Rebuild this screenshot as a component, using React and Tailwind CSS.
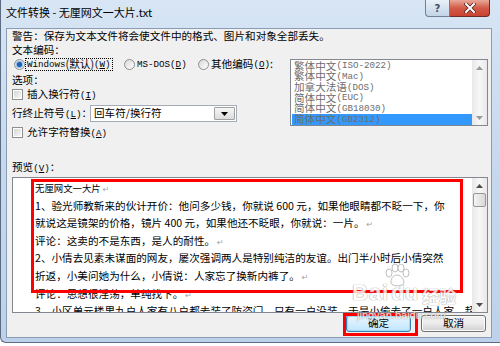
import React from 'react'

const mono = "font-['Liberation_Mono',monospace] text-[9.2px]"

function Radio({ checked }) {
  return (
    <span className="w-[11px] h-[11px] shrink-0 rounded-full border border-[#8e8f8f] bg-linear-to-br from-[#d8d8d8] to-white flex items-center justify-center">
      {checked && <span className="w-[5px] h-[5px] rounded-full bg-[#1d5fb2] shadow-[0_0_1px_1px_#7fb2ea]" />}
    </span>
  )
}

function Checkbox() {
  return (
    <span className="w-[11px] h-[11px] shrink-0 border border-[#8e8f8f] bg-white p-[1px]">
      <span className="block w-full h-full bg-linear-to-br from-[#d6d6d6] to-[#f7f7f7]" />
    </span>
  )
}

function Key({ k }) {
  return (
    <span className={mono}>
      (<span className="underline underline-offset-1">{k}</span>)
    </span>
  )
}

function Arrow({ up, color = '#4d4d4d' }) {
  return (
    <svg width="7" height="4" viewBox="0 0 7 4">
      <path d={up ? 'M0 4 L3.5 0 L7 4 Z' : 'M0 0 L3.5 4 L7 0 Z'} fill={color} />
    </svg>
  )
}

function Scrollbar({ thumb, arrowColor }) {
  return (
    <div className="w-[15px] shrink-0 flex flex-col bg-linear-to-r from-[#e8e8e8] via-[#f7f7f7] to-[#e8e8e8]">
      <div className="h-[15px] flex items-center justify-center">
        <Arrow up color={arrowColor} />
      </div>
      {thumb && (
        <div className="h-[14px] mx-[1px] rounded-[2px] border border-[#979797] bg-linear-to-r from-[#f4f4f4] to-[#d9d9d9]" />
      )}
      <div className="flex-1" />
      <div className="h-[15px] flex items-center justify-center">
        <Arrow color={arrowColor} />
      </div>
    </div>
  )
}

const encodings = [
  ['繁体中文', '(ISO-2022)'],
  ['繁体中文', '(Mac)'],
  ['加拿大法语', '(DOS)'],
  ['简体中文', '(EUC)'],
  ['简体中文', '(GB18030)'],
  ['简体中文', '(GB2312)'],
]

const Mark = () => <span className="text-[#a0a0a0] text-[8px] font-['DejaVu_Sans',sans-serif] ml-[2px]">↵</span>

const previewLines = [
  <span className="text-[9.4px]">无厘网文一大片<Mark /></span>,
  <>1、验光师教新来的伙计开价：他问多少钱，你就说 600 元，如果他眼睛都不眨一下，你</>,
  <>就说这是镜架的价格，镜片 400 元，如果他还不眨眼，你就说：一片。<Mark /></>,
  <>评论：这卖的不是东西，是人的耐性。<Mark /></>,
  <>2、小倩去见素未谋面的网友，屡次强调两人是特别纯洁的友谊。出门半小时后小倩突然</>,
  <>折返，小美问她为什么，小倩说：人家忘了换新内裤了。<Mark /></>,
  <>评论：思想很淫荡，单纯找下。<Mark /></>,
  <>3、小区单元楼里九户人家有八户都去装了防盗门，只有一户没装，于是小偷去了一户人家，超</>,
]

function Button({ children, focused }) {
  return (
    <div
      className={
        'w-[65px] h-[17px] rounded-[3px] border flex items-center justify-center leading-none ' +
        (focused
          ? 'border-[#3c7fb1] bg-linear-to-b from-[#eaf6fd] to-[#bee6fd] shadow-[inset_0_0_0_1px_#9fd9f7]'
          : 'border-[#707070] bg-linear-to-b from-[#f2f2f2] via-[#ebebeb] to-[#cfcfcf] shadow-[inset_0_0_0_1px_#fcfcfc]')
      }
    >
      {children}
    </div>
  )
}

export default function App() {
  return (
    <div className="w-[500px] h-[346px] bg-white overflow-hidden relative font-['Noto_Sans_CJK_SC',sans-serif] text-black">
      <div className="h-[343px] flex flex-col border-l border-b border-[#5b6b80] rounded-bl-[6px] bg-linear-to-b from-[#d7e5f4] via-[#c6d8ee] to-[#bdd2ea]">
        {/* title bar */}
        <div className="h-[28px] shrink-0 flex items-start">
          <div className="pl-[5px] pt-[4px] text-[11px] leading-[17px] whitespace-nowrap">文件转换 - 无厘网文一大片.txt</div>
          <div className="ml-auto mr-[10px] flex">
            <div className="w-[25px] h-[17px] border border-[#6f8097] border-t-0 rounded-bl-[4px] bg-linear-to-b from-[#e9f0f8] to-[#c3d4e8] flex items-center justify-center text-[10px] font-bold text-[#3d4f66] font-['DejaVu_Sans',sans-serif]">
              ?
            </div>
            <div className="w-[40px] h-[17px] border border-[#6a2e28] border-t-0 border-l-0 rounded-br-[4px] bg-linear-to-b from-[#e8a89a] via-[#d25a48] to-[#c8432f] flex items-center justify-center">
              <svg width="12" height="10" viewBox="0 0 12 10">
                <path d="M2 1 L10 9 M10 1 L2 9" stroke="#4a2020" strokeWidth="3.4" strokeLinecap="square" />
                <path d="M2 1 L10 9 M10 1 L2 9" stroke="#ffffff" strokeWidth="2" strokeLinecap="square" />
              </svg>
            </div>
          </div>
        </div>

        {/* client area */}
        <div className="h-[310px] ml-[5px] mr-[8px] border border-[#8a9db5] bg-[#f0f0f0] flex flex-col pl-[5px] pr-[3px] text-[10.6px]">
          <div className="h-[14px] leading-[14px] whitespace-nowrap">警告：保存为文本文件将会使文件中的格式、图片和对象全部丢失。</div>
          <div className="h-[14px] leading-[14px]">文本编码：</div>

          <div className="h-[83px] flex">
            <div className="flex-1 flex flex-col">
              <div className="h-[15px] flex items-center whitespace-nowrap">
                <span className="ml-[2px]"><Radio checked /></span>
                <span className="w-[88px] h-[13px] border border-dotted border-black px-[1px] flex items-center leading-none">
                  <span className={mono}>Windows</span>(默认)<Key k="W" />
                </span>
                <span className="ml-[11px]"><Radio /></span>
                <span className="w-[52px] pl-[2px] flex items-center leading-none">
                  <span className={mono}>MS-DOS</span><Key k="D" />
                </span>
                <span className="ml-[11px]"><Radio /></span>
                <span className="pl-[2px] flex items-center leading-none">
                  其他编码<Key k="O" />:
                </span>
              </div>
              <div className="h-[15px] leading-[15px]">选项：</div>
              <div className="h-[15px] flex items-center">
                <Checkbox />
                <span className="ml-[4px] leading-none">插入换行符<Key k="I" /></span>
              </div>
              <div className="mt-[3px] h-[17px] flex items-center">
                <span className="w-[78px] shrink-0 leading-none whitespace-nowrap">行终止符号<Key k="L" />：</span>
                <div className="w-[147px] h-[17px] border border-[#a5acb5] bg-white flex">
                  <div className="flex-1 pl-[3px] flex items-center leading-none">回车符/换行符</div>
                  <div className="w-[21px] m-[1px] border border-[#a0a0a0] rounded-[1px] bg-linear-to-b from-[#f6f6f6] to-[#dcdcdc] flex items-center justify-center">
                    <Arrow color="#000000" />
                  </div>
                </div>
              </div>
              <div className="mt-[3px] h-[15px] flex items-center">
                <Checkbox />
                <span className="ml-[4px] leading-none">允许字符替换<Key k="A" /></span>
              </div>
            </div>

            <div className="mt-[2px] w-[198px] h-[67px] border border-[#828790] bg-white flex">
              <div className="flex-1 pt-[0.5px] pl-[1px] text-[#6d6d6d]">
                {encodings.map(([cn, en], i) => (
                  <div
                    key={i}
                    className={'h-[10.7px] pl-[2px] flex items-center leading-none whitespace-nowrap ' + (i === 5 ? 'bg-[#3399ff]' : '')}
                  >
                    {cn}
                    <span className={mono}>{en}</span>
                  </div>
                ))}
              </div>
              <Scrollbar arrowColor="#9a9a9a" />
            </div>
          </div>

          <div className="mt-[20px] h-[14px] leading-[14px]">
            预览<Key k="V" />：
          </div>

          <div className="mt-[3px] h-[136px] border border-[#828790] bg-white flex relative overflow-hidden">
            <div className="flex-1 pl-[22px] pt-[1px] leading-[17.6px] overflow-hidden">
              {previewLines.map((l, i) => (
                <div key={i} className="h-[17.6px] whitespace-nowrap">{l}</div>
              ))}
            </div>
            <Scrollbar thumb arrowColor="#4d4d4d" />
            <div className="absolute left-[18px] top-[1px] w-[432px] h-[114px] border-[3px] border-[#ff0000]" />
          </div>

          <div className="mt-[2px] h-[17px] flex justify-end gap-[10px] pr-[2px]">
            <div className="relative">
              <Button focused>确定</Button>
              <div className="absolute left-[-3px] top-[-2px] w-[75px] h-[23px] border-[3px] border-[#ff0000]" />
            </div>
            <Button>取消</Button>
          </div>
        </div>
      </div>

      {/* watermark */}
      <div className="absolute left-[352px] top-[262px] opacity-80 pointer-events-none text-white [text-shadow:0_0_1px_#8a8a8a,0_0_1px_#8a8a8a]">
        <svg width="26" height="24" viewBox="0 0 26 24" className="absolute left-[32px] top-[2px]">
          <g fill="#ffffff" stroke="#9a9a9a" strokeWidth="0.8">
            <ellipse cx="5" cy="9" rx="3" ry="4" />
            <ellipse cx="11" cy="4" rx="3" ry="4" />
            <ellipse cx="17" cy="4" rx="3" ry="4" />
            <ellipse cx="22" cy="9" rx="3" ry="4" />
            <path d="M13 11 C7 11 5 20 9 21 C11 22 15 22 18 21 C22 20 19 11 13 11 Z" />
          </g>
        </svg>
        <div className="flex items-end mt-[20px] leading-none">
          <span className="font-['Liberation_Sans',sans-serif] font-bold text-[22px] tracking-[1px]">Bai</span>
          <span className="font-['Liberation_Sans',sans-serif] font-bold text-[22px] ml-[2px]">du</span>
          <span className="text-[17px] font-bold ml-[4px]">经验</span>
        </div>
        <div className="mt-[6px] ml-[5px] font-['Liberation_Sans',sans-serif] text-[11px] leading-none">jingyan.baidu.com</div>
      </div>
    </div>
  )
}
